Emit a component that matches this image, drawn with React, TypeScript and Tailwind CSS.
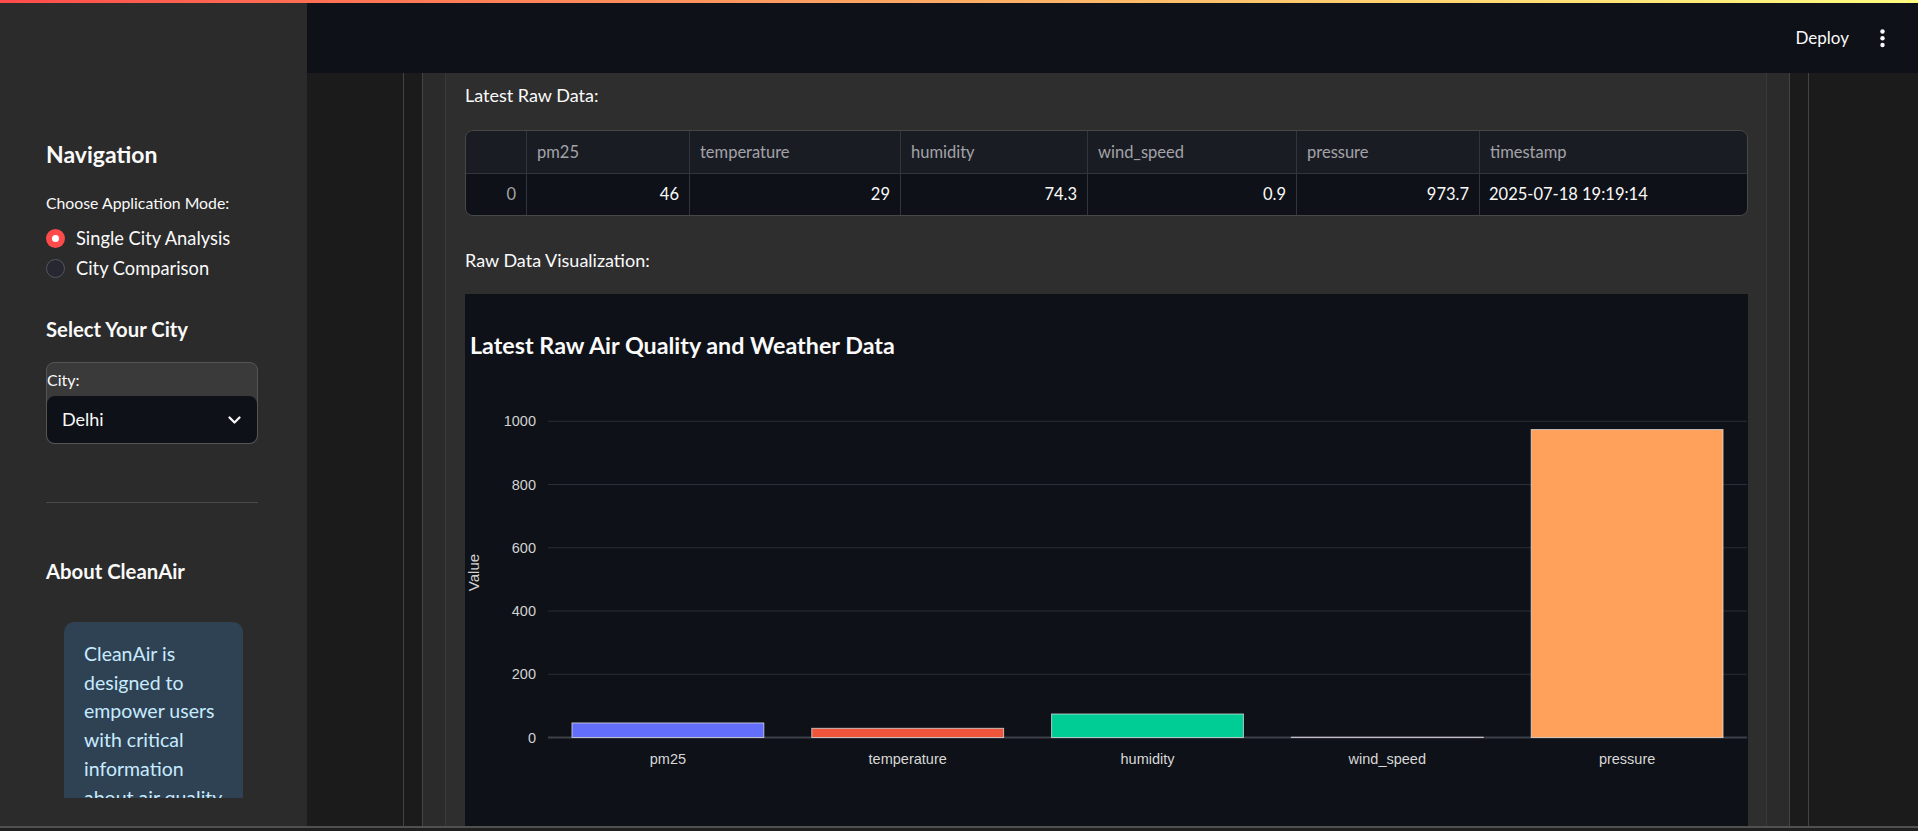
import React from 'react';

type Bar = { label: string; value: number; color: string };

const bars: Bar[] = [
  { label: 'pm25', value: 46, color: '#636efa' },
  { label: 'temperature', value: 29, color: '#ef553b' },
  { label: 'humidity', value: 74.3, color: '#00cc96' },
  { label: 'wind_speed', value: 0.9, color: '#ab63fa' },
  { label: 'pressure', value: 973.7, color: '#ffa15a' },
];

const columns = ['pm25', 'temperature', 'humidity', 'wind_speed', 'pressure', 'timestamp'];
const row = ['46', '29', '74.3', '0.9', '973.7'];

const infoLines = [
  'CleanAir is',
  'designed to',
  'empower users',
  'with critical',
  'information',
  'about air quality',
  'and weather',
  'conditions.',
];

function Radio({ checked, label }: { checked: boolean; label: string }) {
  return (
    <div className="h-[30px] flex items-center gap-[11px]">
      {checked ? (
        <div className="w-[19px] h-[19px] rounded-full bg-[#ff4b4b] flex items-center justify-center">
          <div className="w-[7px] h-[7px] rounded-full bg-white" />
        </div>
      ) : (
        <div className="w-[19px] h-[19px] rounded-full bg-[#262730] border border-[#55555e]" />
      )}
      <span className="text-[18.3px] leading-[30px]">{label}</span>
    </div>
  );
}

function Sidebar() {
  return (
    <aside className="w-[307px] shrink-0 bg-[#2b2b2b] flex flex-col">
      <div className="h-[795px] overflow-hidden pl-[46px] pr-[49px] pt-[135px]">
        <h3 className="h-[32px] leading-[32px] text-[23px] font-bold">Navigation</h3>
        <p className="mt-[21px] h-[24px] leading-[24px] text-[15.8px]">Choose Application Mode:</p>
        <div className="mt-[8px]">
          <Radio checked label="Single City Analysis" />
          <Radio checked={false} label="City Comparison" />
        </div>

        <h3 className="mt-[30px] h-[32px] leading-[32px] text-[20.3px] font-bold">Select Your City</h3>
        <div className="mt-[17px] h-[82px] rounded-[8px] border border-[#555] bg-[#3a3a3a] overflow-hidden flex flex-col">
          <div className="h-[33px] flex items-center text-[16px]">City:</div>
          <div className="flex-1 rounded-[8px] bg-[#0e1117] flex items-center justify-between pl-[15px] pr-[16px]">
            <span className="text-[18px]">Delhi</span>
            <svg width="13" height="8" viewBox="0 0 13 8" fill="none">
              <path d="M1.5 1.5l5 5 5-5" stroke="#fafafa" strokeWidth="2.2" strokeLinecap="round" strokeLinejoin="round" />
            </svg>
          </div>
        </div>

        <div className="mt-[58px] h-px bg-[#4a4a4a]" />

        <h3 className="mt-[52px] h-[32px] leading-[32px] text-[20.3px] font-bold">About CleanAir</h3>
        <div className="mt-[35px] ml-[18px] w-[179px] rounded-[10px] bg-[#2f4253] pl-[20px] pr-[14px] pt-[18px] pb-[20px] text-[#c7ebff] text-[19.5px] leading-[28.7px]">
          {infoLines.map((l) => (
            <span key={l} className="block whitespace-nowrap">
              {l}
            </span>
          ))}
        </div>
      </div>
    </aside>
  );
}

function Header() {
  return (
    <div className="h-[70px] shrink-0 bg-[#0e1117] flex items-center justify-end pr-[33px]">
      <span className="text-[17px] mr-[31px]">Deploy</span>
      <svg width="5" height="19" viewBox="0 0 5 19">
        <circle cx="2.5" cy="2.5" r="2.2" fill="#fafafa" />
        <circle cx="2.5" cy="9.3" r="2.2" fill="#fafafa" />
        <circle cx="2.5" cy="16" r="2.2" fill="#fafafa" />
      </svg>
    </div>
  );
}

function DataTable() {
  const grid = 'grid grid-cols-[60px_163px_211px_187px_209px_183px_1fr]';
  return (
    <div className="mt-[20px] border border-[#474747] rounded-[8px] overflow-hidden text-[16.5px]">
      <div className={`${grid} h-[42px] bg-[#1a1c24] text-[#a3a3a8]`}>
        <div />
        {columns.map((c) => (
          <div key={c} className="border-l border-[#33353c] px-[10px] flex items-center">
            {c}
          </div>
        ))}
      </div>
      <div className={`${grid} h-[42px] border-t border-[#33353c] bg-[#0e1117]`}>
        <div className="px-[10px] flex items-center justify-end text-[#a3a3a8]">0</div>
        {row.map((v, i) => (
          <div key={i} className="border-l border-[#33353c] px-[10px] flex items-center justify-end">
            {v}
          </div>
        ))}
        <div className="border-l border-[#33353c] pl-[9px] flex items-center">2025-07-18 19:19:14</div>
      </div>
    </div>
  );
}

function Chart() {
  const W = 1282;
  const plotLeft = 83;
  const y0 = 443.5;
  const k = 0.31624;
  const band = (W - plotLeft) / bars.length;
  const ticks = [0, 200, 400, 600, 800, 1000];
  const axisFont = "'Liberation Sans', Arial, sans-serif";

  return (
    <div className="mt-[19px] h-[560px] bg-[#0e1117]">
      <svg width={W} height={560}>
        <text x={5} y={60} fill="#fafafa" fontSize="23.3" fontWeight="700" fontFamily="Lato, sans-serif">
          Latest Raw Air Quality and Weather Data
        </text>
        {ticks.map((t) => {
          const y = y0 - t * k;
          return (
            <g key={t}>
              <line x1={plotLeft} x2={W} y1={y} y2={y} stroke={t === 0 ? '#3c4049' : '#2a2e36'} strokeWidth={t === 0 ? 2 : 1} />
              <text x={71} y={y + 5} textAnchor="end" fill="#d2d2d2" fontSize="14.5" fontFamily={axisFont}>
                {t}
              </text>
            </g>
          );
        })}
        {bars.map((b, i) => {
          const x = plotLeft + i * band + band * 0.1;
          const h = b.value * k;
          return (
            <g key={b.label}>
              <rect x={x} y={y0 - h} width={band * 0.8} height={h} fill={b.color} stroke="rgba(225,225,225,0.75)" strokeWidth={1} />
              <text x={plotLeft + (i + 0.5) * band} y={y0 + 26} textAnchor="middle" fill="#d8d8d8" fontSize="14.5" fontFamily={axisFont}>
                {b.label}
              </text>
            </g>
          );
        })}
        <text
          x={0}
          y={0}
          transform="translate(14 278.5) rotate(-90)"
          textAnchor="middle"
          fill="#d2d2d2"
          fontSize="15"
          fontFamily={axisFont}
        >
          Value
        </text>
      </svg>
    </div>
  );
}

function Body() {
  return (
    <div className="flex-1 min-h-0 flex pl-[96px] pr-[109px] overflow-hidden">
      <div className="flex-1 flex border-x border-[#444] px-[18px]">
        <div className="flex-1 flex border-x border-[#444] bg-[#2b2b2b] px-[22px]">
          <div className="flex-1 min-w-0 border-x border-[#393939] bg-[#2e2e2e] pl-[19px] pr-[18px] pt-[7px]">
            <p className="h-[30px] leading-[30px] text-[18px]">Latest Raw Data:</p>
            <DataTable />
            <p className="mt-[29px] h-[30px] leading-[30px] text-[18px]">Raw Data Visualization:</p>
            <Chart />
          </div>
        </div>
      </div>
    </div>
  );
}

export default function App() {
  return (
    <div className="w-[1918px] h-[831px] overflow-hidden bg-[#1b1b1b] font-[Lato,sans-serif] text-[#fafafa] flex flex-col">
      <div className="h-[3px] shrink-0 bg-linear-to-r from-[#ff4b4b] to-[#fffd80]" />
      <div className="flex h-[823px] shrink-0">
        <Sidebar />
        <div className="flex-1 flex flex-col min-w-0">
          <Header />
          <Body />
        </div>
      </div>
      <div className="h-[2px] shrink-0 bg-[#505050]" />
      <div className="flex-1 bg-[#202020]" />
    </div>
  );
}
